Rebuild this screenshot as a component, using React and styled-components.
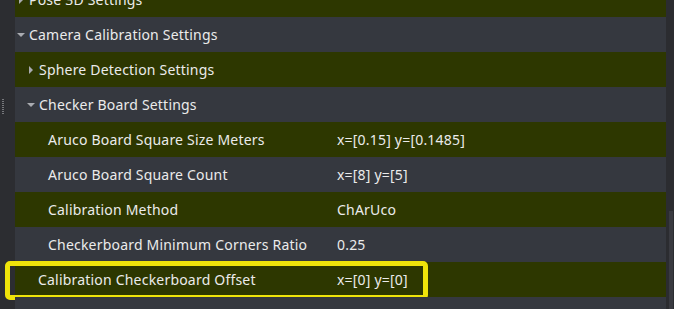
import React from "react";
import styled, { createGlobalStyle } from "styled-components";

const rows = [
  { label: "Pose 3D Settings", depth: 0, arrow: "right" },
  { label: "Camera Calibration Settings", depth: 0, arrow: "down" },
  { label: "Sphere Detection Settings", depth: 1, arrow: "right" },
  { label: "Checker Board Settings", depth: 1, arrow: "down" },
  { label: "Aruco Board Square Size Meters", depth: 2, value: "x=[0.15] y=[0.1485]" },
  { label: "Aruco Board Square Count", depth: 2, value: "x=[8] y=[5]" },
  { label: "Calibration Method", depth: 2, value: "ChArUco" },
  { label: "Checkerboard Minimum Corners Ratio", depth: 2, value: "0.25" },
  { label: "Calibration Checkerboard Offset", depth: 1, value: "x=[0] y=[0]", marked: true },
  { label: "Calibration Output Settings", depth: 1, arrow: "right" },
];

const Global = createGlobalStyle`
  html, body {
    margin: 0;
    background: #2c2d31;
    overflow: hidden;
  }
  body {
    font-family: "Noto Sans", "Open Sans", sans-serif;
  }
`;

const Panel = styled.div`
  display: flex;
  width: 674px;
  height: 309px;
  overflow: hidden;
`;

const Gutter = styled.div`
  width: 15px;
  flex: none;
  background: #2c2d31;
  display: flex;
  align-items: flex-start;
  padding-top: 99px;
  padding-left: 2px;
  box-sizing: border-box;
`;

const Grip = styled.div`
  width: 2px;
  height: 16px;
  background: repeating-linear-gradient(
    to bottom,
    #77787c 0 1px,
    transparent 1px 2px
  );
`;

const Tree = styled.div`
  flex: 1;
  display: flex;
  flex-direction: column;
  margin-top: -18px;
`;

const Row = styled.div`
  position: relative;
  height: 35px;
  flex: none;
  display: grid;
  grid-template-columns: 322px 1fr;
  align-items: center;
  background: ${(p) => (p.$odd ? "#2d3700" : "#35383f")};
  color: #ebebeb;
  font-size: 14px;
  letter-spacing: 0.2px;
`;

const Label = styled.div`
  display: flex;
  align-items: center;
  padding-left: ${(p) => 2 + p.$depth * 10}px;
  white-space: nowrap;
`;

const Arrow = styled.span`
  width: 12px;
  flex: none;
  display: flex;
  justify-content: flex-start;
  &::before {
    content: "";
    display: block;
    ${(p) =>
      p.$dir === "down"
        ? `border-left: 4px solid transparent;
           border-right: 4px solid transparent;
           border-top: 4px solid #a9abb0;
           margin-left: 0px;`
        : `border-top: 4px solid transparent;
           border-bottom: 4px solid transparent;
           border-left: 4px solid #a9abb0;
           margin-left: 2px;`}
  }
`;

const Spacer = styled.span`
  width: 11px;
  flex: none;
`;

const Value = styled.div`
  white-space: nowrap;
`;

const Mark = styled.div`
  position: absolute;
  left: -10px;
  top: -1px;
  width: 423px;
  height: 39px;
  border: 5px solid #efe40a;
  border-radius: 5px;
  box-sizing: border-box;
  pointer-events: none;
`;

const Scrollbar = styled.div`
  width: 8px;
  flex: none;
  background: #2b2c30;
  display: flex;
  flex-direction: column;
  padding-top: 211px;
  box-sizing: border-box;
`;

const Thumb = styled.div`
  flex: 1;
  margin-left: 3px;
  margin-right: 1px;
  background: #393a40;
`;

export default function App() {
  return (
    <>
      <Global />
      <Panel>
        <Gutter>
          <Grip />
        </Gutter>
        <Tree>
          {rows.map((r, i) => (
            <Row key={r.label} $odd={i % 2 === 0}>
              <Label $depth={r.depth}>
                {r.arrow ? <Arrow $dir={r.arrow} /> : <Spacer />}
                {r.label}
              </Label>
              <Value>{r.value}</Value>
              {r.marked && <Mark />}
            </Row>
          ))}
        </Tree>
        <Scrollbar>
          <Thumb />
        </Scrollbar>
      </Panel>
    </>
  );
}
